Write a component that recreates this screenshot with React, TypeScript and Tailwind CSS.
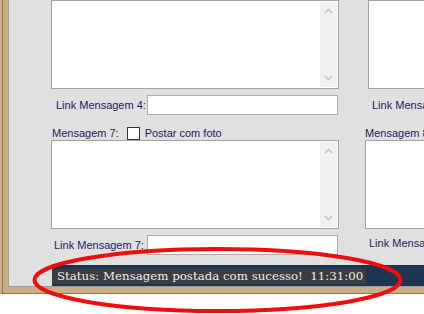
import React from "react";

const labelCls = "text-[11px] leading-[13px] text-[#1b1b5f] whitespace-nowrap";

function Chevron({ up }: { up?: boolean }) {
  return (
    <svg width="9" height="6" viewBox="0 0 9 6" className="block">
      <path
        d={up ? "M1 5 L4.5 1.5 L8 5" : "M1 1 L4.5 4.5 L8 1"}
        fill="none"
        stroke="#c2c2c2"
        strokeWidth="1.6"
      />
    </svg>
  );
}

function MessageBox({ scroll = true, className = "" }: { scroll?: boolean; className?: string }) {
  return (
    <div className={`flex h-[89px] shrink-0 justify-end border border-[#a3a3a3] bg-white p-[1px] ${className}`}>
      {scroll && (
        <div className="flex w-[17px] flex-col items-center justify-between bg-[#f0f0f0] py-[6px]">
          <Chevron up />
          <Chevron />
        </div>
      )}
    </div>
  );
}

function LinkInput() {
  return <div className="ml-auto mr-[1px] h-[20px] w-[191px] border border-[#ababab] bg-white" />;
}

export default function App() {
  return (
    <div className="relative h-[314px] w-[424px] overflow-hidden bg-white font-['Liberation_Sans',Arial,sans-serif]">
      <div className="flex h-[294px] bg-[#c9ae86] pl-[2px]">
        <div className="flex min-w-0 flex-1 border-b border-l border-[#8e7656] pb-[6px] pl-[5px]">
          <div className="flex min-w-0 flex-1 flex-col overflow-hidden border-b border-l border-[#9c9c9c] bg-[#e0e0e0]">
            <div className="flex gap-[26px] pl-[42px]">
              {/* left column */}
              <div className="flex w-[288px] shrink-0 flex-col">
                <MessageBox />
                <div className="mt-[6px] flex h-[20px] items-center">
                  <span className={`${labelCls} ml-[5px]`}>Link Mensagem 4:</span>
                  <LinkInput />
                </div>
                <div className="mt-[12px] flex h-[13px] items-center">
                  <span className={`${labelCls} ml-[1px] -mt-[1px]`}>Mensagem 7:</span>
                  <span className="ml-[8px] h-[13px] w-[13px] border border-[#333] bg-white" />
                  <span className={`${labelCls} ml-[5px] -mt-[1px]`}>Postar com foto</span>
                </div>
                <MessageBox />
                <div className="mt-[6px] flex h-[20px] items-center">
                  <span className={`${labelCls} ml-[3px]`}>Link Mensagem 7:</span>
                  <LinkInput />
                </div>
              </div>

              {/* right column, cut off by the window */}
              <div className="flex w-[200px] shrink-0 flex-col">
                <MessageBox scroll={false} className="ml-[3px]" />
                <div className="mt-[6px] flex h-[20px] items-center">
                  <span className={`${labelCls} ml-[7px]`}>Link Mensagem 5:</span>
                </div>
                <div className="mt-[12px] flex h-[13px] items-center">
                  <span className={`${labelCls} -mt-[1px]`}>Mensagem 8:</span>
                </div>
                <MessageBox scroll={false} />
                <div className="mt-[6px] flex h-[20px] items-center">
                  <span className={`${labelCls} ml-[4px] -mt-[3px]`}>Link Mensagem 8:</span>
                </div>
              </div>
            </div>

            {/* status strip */}
            <div className="ml-[43px] mt-auto flex h-[21px] items-start bg-[#1f3450] pt-[4px]">
              <div className="flex h-[15px] items-center whitespace-pre bg-[#3b3d40] pl-[5px] pr-[3px] font-['DejaVu_Serif',serif] text-[11.8px] leading-none text-[#eeeeee]">
                Status: Mensagem postada com sucesso!  11:31:00
              </div>
            </div>
          </div>
        </div>
      </div>

      {/* red annotation ring */}
      <svg className="pointer-events-none absolute inset-0" width="424" height="314">
        <ellipse cx="217.5" cy="280" rx="183" ry="31" fill="none" stroke="#f20d0d" strokeWidth="4" />
      </svg>
    </div>
  );
}
